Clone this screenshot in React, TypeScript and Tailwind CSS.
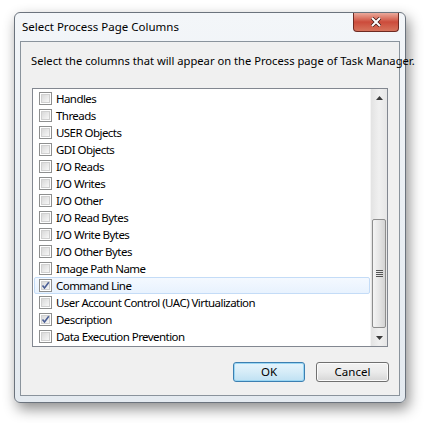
const items: { label: string; checked?: boolean; selected?: boolean }[] = [
  { label: 'Handles' },
  { label: 'Threads' },
  { label: 'USER Objects' },
  { label: 'GDI Objects' },
  { label: 'I/O Reads' },
  { label: 'I/O Writes' },
  { label: 'I/O Other' },
  { label: 'I/O Read Bytes' },
  { label: 'I/O Write Bytes' },
  { label: 'I/O Other Bytes' },
  { label: 'Image Path Name' },
  { label: 'Command Line', checked: true, selected: true },
  { label: 'User Account Control (UAC) Virtualization' },
  { label: 'Description', checked: true },
  { label: 'Data Execution Prevention' },
];

function Checkbox({ checked }: { checked?: boolean }) {
  return (
    <div className="w-[13px] h-[13px] border border-[#8e8f8f] bg-white p-[1px] shrink-0">
      <div className="relative w-full h-full border border-[#d0d0d0] bg-gradient-to-br from-[#d9d9d9] to-[#f7f7f7]">
        {checked && (
          <svg className="absolute -left-[1px] -top-[1px]" width="9" height="9" viewBox="0 0 9 9">
            <path d="M1.5 4.5 L3.5 7 L7.8 1.2" fill="none" stroke="#4a5e95" strokeWidth="1.6" />
          </svg>
        )}
      </div>
    </div>
  );
}

function Row({ label, checked, selected }: { label: string; checked?: boolean; selected?: boolean }) {
  return (
    <div
      className={`h-[17px] flex items-center pl-[4px] rounded-[2px] border ${
        selected
          ? 'border-[#c4dcf7] bg-gradient-to-b from-[#f4f9ff] to-[#e8f2fe]'
          : 'border-transparent'
      }`}
    >
      <Checkbox checked={checked} />
      <span className="ml-[4px] text-[11.5px] tracking-[-0.55px] leading-none text-black whitespace-nowrap">{label}</span>
    </div>
  );
}

function ScrollBar() {
  return (
    <div className="w-[17px] h-full flex flex-col bg-gradient-to-r from-[#e3e3e3] via-[#f0f0f0] to-[#e6e6e6] border-l border-[#f5f5f5]">
      <div className="h-[17px] flex items-center justify-center">
        <svg width="7" height="4" viewBox="0 0 7 4">
          <path d="M0 4 L3.5 0 L7 4 Z" fill="#3a3a3a" />
        </svg>
      </div>
      <div className="flex-1 flex flex-col justify-end pb-[1px]">
        <div className="mx-[1px] h-[109px] rounded-[2px] border border-[#8d8d8d] bg-gradient-to-r from-[#f4f4f4] via-[#e6e6e6] to-[#d3d3d3] flex items-center justify-center">
          <div className="flex flex-col gap-[1px]">
            <div className="w-[7px] h-[1px] bg-[#555]" />
            <div className="w-[7px] h-[1px] bg-[#555]" />
            <div className="w-[7px] h-[1px] bg-[#555]" />
            <div className="w-[7px] h-[1px] bg-[#555]" />
          </div>
        </div>
      </div>
      <div className="h-[17px] flex items-center justify-center">
        <svg width="7" height="4" viewBox="0 0 7 4">
          <path d="M0 0 L3.5 4 L7 0 Z" fill="#3a3a3a" />
        </svg>
      </div>
    </div>
  );
}

export default function App() {
  return (
    <div
      className="w-[424px] h-[423px] bg-white pt-[12px] pl-[14px]"
      style={{ fontFamily: '"Noto Sans", "Open Sans", sans-serif' }}
    >
      <div className="w-[392px] h-[391px] rounded-[6px] border border-[#6b737d] bg-gradient-to-b from-[#f3f6f9] via-[#eaeff4] to-[#e4eaf0] shadow-[3px_6px_14px_rgba(0,0,0,0.45)] flex flex-col px-[5px] pb-[6px]">
        <div className="h-[28px] flex items-start">
          <span className="mt-[6px] ml-[2px] text-[11.5px] leading-[16px] text-black">Select Process Page Columns</span>
          <div className="ml-auto mr-[1px] w-[46px] h-[19px] rounded-b-[4px] border border-t-0 border-[#6e2a22] bg-gradient-to-b from-[#eaa99b] via-[#cc4b3b] to-[#d6735c] flex items-center justify-center">
            <svg width="12" height="10" viewBox="0 0 12 10">
              <path d="M2 1 L10 9 M10 1 L2 9" stroke="#3b1510" strokeWidth="3.4" />
              <path d="M2 1 L10 9 M10 1 L2 9" stroke="#ffffff" strokeWidth="2" />
            </svg>
          </div>
        </div>
        <div className="flex-1 border border-[#8a939c] bg-[#f0f0f0] flex flex-col px-[10px]">
          <p className="mt-[11px] text-[11.2px] leading-[16px] text-black whitespace-nowrap">
            Select the columns that will appear on the Process page of Task Manager.
          </p>
          <div className="mt-[19px] ml-[1px] w-[356px] h-[259px] border border-[#828790] bg-white flex">
            <div className="flex-1 pt-[1px] pl-[1px]">
              {items.map((it) => (
                <Row key={it.label} {...it} />
              ))}
            </div>
            <ScrollBar />
          </div>
          <div className="mt-[15px] flex justify-end gap-[11px] pr-[0px]">
            <button className="w-[72px] h-[20px] rounded-[3px] border border-[#3c7fb1] bg-gradient-to-b from-[#e5f4fc] via-[#d6ecf8] to-[#bfe1f3] shadow-[inset_0_0_0_1px_#9ad6f3] text-[11.5px] text-black leading-none">
              OK
            </button>
            <button className="w-[73px] h-[20px] rounded-[3px] border border-[#707070] bg-gradient-to-b from-[#f2f2f2] via-[#ebebeb] to-[#d6d6d6] shadow-[inset_0_0_0_1px_#fbfbfb] text-[11.5px] text-black leading-none">
              Cancel
            </button>
          </div>
        </div>
      </div>
    </div>
  );
}
